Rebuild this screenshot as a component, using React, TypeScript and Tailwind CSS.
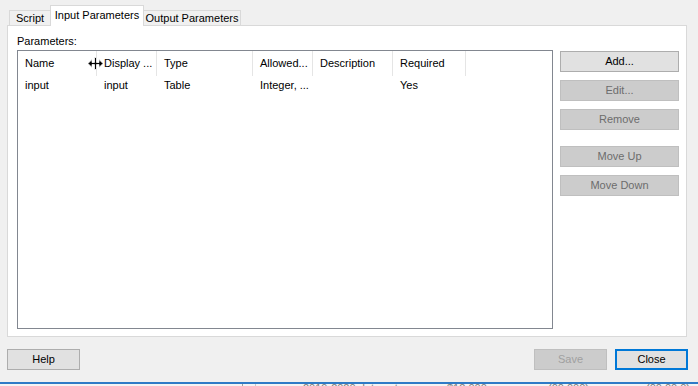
const font = { fontFamily: '"Liberation Sans", Arial, sans-serif' };

const columns = [
	{ label: 'Name', w: 'w-[79px]', pl: 'pl-[7px]' },
	{ label: 'Display ...', w: 'w-[60px]', pl: 'pl-[7px]' },
	{ label: 'Type', w: 'w-[96px]', pl: 'pl-[7px]' },
	{ label: 'Allowed...', w: 'w-[60px]', pl: 'pl-[7px]' },
	{ label: 'Description', w: 'w-[80px]', pl: 'pl-[7px]' },
	{ label: 'Required', w: 'w-[73px]', pl: 'pl-[7px]' },
];

const rows = [['input', 'input', 'Table', 'Integer, ...', '', 'Yes']];

function ResizeCursor() {
	return (
		<svg width="17" height="13" viewBox="0 0 17 13" className="absolute left-[69px] top-[6px]">
			<path
				d="M1 6.5 L5 2.5 V5.5 H7.5 V0.5 H9.5 V5.5 H12 V2.5 L16 6.5 L12 10.5 V7.5 H9.5 V12.5 H7.5 V7.5 H5 V10.5 Z"
				fill="#000"
				stroke="#fff"
				strokeWidth="0.8"
			/>
		</svg>
	);
}

function SideButton({ label, enabled }: { label: string; enabled?: boolean }) {
	return (
		<div
			className={
				enabled
					? 'flex h-[21px] w-[119px] items-center justify-center border border-[#adadad] bg-[#e1e1e1] text-black'
					: 'flex h-[21px] w-[119px] items-center justify-center border border-[#bfbfbf] bg-[#cccccc] text-[#6d6d6d]'
			}
		>
			{label}
		</div>
	);
}

export default function App() {
	return (
		<div
			className="flex h-[386px] w-[698px] flex-col overflow-hidden bg-[#f0f0f0] text-[11px] leading-[13px] text-black"
			style={font}
		>
			{/* tabs */}
			<div className="flex h-[25px] shrink-0 items-end pl-[9px]">
				<div className="flex h-[15px] w-[41px] items-center justify-center border-l border-t border-[#d9d9d9] bg-[#f0f0f0]">
					Script
				</div>
				<div className="relative z-10 -mb-px flex h-[21px] w-[94px] items-center justify-center border-x border-t border-[#d9d9d9] bg-white pb-[2px]">
					Input Parameters
				</div>
				<div className="flex h-[15px] w-[97px] items-center justify-center border-r border-t border-[#d9d9d9] bg-[#f0f0f0]">
					Output Parameters
				</div>
			</div>

			{/* tab page */}
			<div className="ml-[7px] flex h-[312px] w-[680px] shrink-0 flex-col border border-[#d9d9d9] bg-white pl-[9px]">
				<div className="mt-[9px] h-[13px]">Parameters:</div>
				<div className="mt-[2px] flex">
					<div className="relative h-[279px] w-[536px] border border-[#828790] bg-white">
						<div className="flex h-[25px]">
							{columns.map((c) => (
								<div
									key={c.label}
									className={`${c.w} ${c.pl} flex items-center border-r border-[#e5e5e5]`}
								>
									{c.label}
								</div>
							))}
						</div>
						{rows.map((r, i) => (
							<div key={i} className="mt-px flex h-[17px]">
								{r.map((v, j) => (
									<div key={j} className={`${columns[j].w} ${columns[j].pl} flex items-center`}>
										{v}
									</div>
								))}
							</div>
						))}
						<ResizeCursor />
					</div>
					<div className="ml-[7px] flex flex-col gap-[8px] pt-px">
						<SideButton label="Add..." enabled />
						<SideButton label="Edit..." />
						<SideButton label="Remove" />
						<div className="mt-[8px]">
							<SideButton label="Move Up" />
						</div>
						<SideButton label="Move Down" />
					</div>
				</div>
			</div>

			{/* dialog buttons */}
			<div className="mt-[12px] flex h-[21px] shrink-0 pl-[7px] pr-[10px]">
				<div className="flex w-[73px] items-center justify-center border border-[#adadad] bg-[#e1e1e1]">Help</div>
				<div className="ml-auto flex w-[73px] items-center justify-center border border-[#bfbfbf] bg-[#cccccc] text-[#a0a0a0]">
					Save
				</div>
				<div className="ml-[8px] flex w-[73px] items-center justify-center border-2 border-[#0078d7] bg-[#e1e1e1]">
					Close
				</div>
			</div>

			{/* window underneath */}
			<div className="mt-[12px] h-[2px] shrink-0 bg-[#2f7bc6]" />
			<div className="flex h-[2px] shrink-0 overflow-hidden bg-[#f4f4f4] text-[11px] leading-[11px] text-[#7a7a7a]">
				<div className="w-[243px] border-r border-[#a0a0a0]" />
				<div className="w-[13px] border-r border-[#c8c8c8]" />
				<div className="w-[47px]" />
				<div className="-mt-[1px] w-[144px]">2019-2020 data set</div>
				<div className="-mt-[1px] w-[101px]">$12,000</div>
				<div className="-mt-[1px] w-[98px]">(00,000)</div>
				<div className="-mt-[1px]">(00.00 0)</div>
			</div>
		</div>
	);
}
